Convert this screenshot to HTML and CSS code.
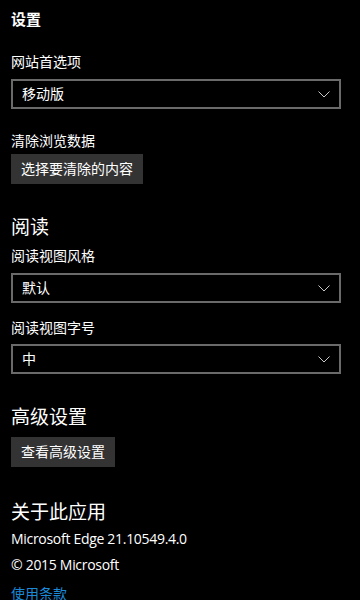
FILE: index.html
```html
<!DOCTYPE html>
<html lang="zh-CN">
<head>
<meta charset="utf-8">
<title>设置</title>
<link rel="stylesheet" href="styles.css">
</head>
<body>
<div class="page">
  <div class="header">设置</div>

  <div class="label label-first">网站首选项</div>
  <div class="select">
    <span class="select-text">移动版</span>
    <svg class="chev" width="12" height="7" viewBox="0 0 12 7"><path d="M0.5 0.5 L6 6 L11.5 0.5" fill="none" stroke="#c8c8c8" stroke-width="1"/></svg>
  </div>

  <div class="label label-gap">清除浏览数据</div>
  <div class="btn btn-tight">选择要清除的内容</div>

  <div class="title title-read">阅读</div>
  <div class="label label-sub">阅读视图风格</div>
  <div class="select">
    <span class="select-text">默认</span>
    <svg class="chev" width="12" height="7" viewBox="0 0 12 7"><path d="M0.5 0.5 L6 6 L11.5 0.5" fill="none" stroke="#c8c8c8" stroke-width="1"/></svg>
  </div>

  <div class="label label-gap2">阅读视图字号</div>
  <div class="select">
    <span class="select-text">中</span>
    <svg class="chev" width="12" height="7" viewBox="0 0 12 7"><path d="M0.5 0.5 L6 6 L11.5 0.5" fill="none" stroke="#c8c8c8" stroke-width="1"/></svg>
  </div>

  <div class="title title-adv">高级设置</div>
  <div class="btn btn-adv">查看高级设置</div>

  <div class="title title-about">关于此应用</div>
  <div class="info info-first">Microsoft Edge 21.10549.4.0</div>
  <div class="info">© 2015 Microsoft</div>
  <div class="link">使用条款</div>
</div>
</body>
</html>
```

FILE: styles.css
```css
html, body {
  margin: 0;
  padding: 0;
  background: #000;
}
body {
  color: #fff;
  font-family: "Noto Sans", "Noto Sans CJK SC", sans-serif;
  font-size: 14px;
  width: 360px;
  height: 600px;
  overflow: hidden;
}
.page {
  padding: 9px 0 0 11px;
  display: flex;
  flex-direction: column;
  align-items: flex-start;
}
.header {
  font-size: 15px;
  line-height: 20px;
  font-weight: 600;
}
.label {
  font-size: 14px;
  line-height: 20px;
}
.label-first { margin-top: 23px; margin-bottom: 7px; }
.label-gap { margin-top: 22px; margin-bottom: 3px; }
.label-sub { margin-top: 6px; margin-bottom: 7px; }
.label-gap2 { margin-top: 15px; margin-bottom: 6px; }
.select {
  box-sizing: border-box;
  width: 330px;
  height: 30px;
  border: 2px solid #6a6a6a;
  display: flex;
  align-items: center;
  justify-content: space-between;
  padding: 0 9px 0 9px;
}
.select-text {
  font-size: 14px;
  line-height: 20px;
}
.chev {
  display: block;
  margin-top: 1px;
}
.btn {
  box-sizing: border-box;
  height: 30px;
  background: #333;
  padding: 0 10px;
  display: flex;
  align-items: center;
  font-size: 14px;
  line-height: 20px;
  color: #fff;
}
.title {
  font-size: 19px;
  line-height: 26px;
}
.title-read { margin-top: 30px; }
.title-adv { margin-top: 30px; margin-bottom: 7px; }
.title-about { margin-top: 32px; }
.info {
  font-family: "Open Sans", "Noto Sans CJK SC", sans-serif;
  font-size: 14px;
  line-height: 20px;
  letter-spacing: -0.3px;
  margin-top: 6px;
}
.info-first { margin-top: 4px; }
.link {
  color: #1a8ad8;
  font-size: 14px;
  line-height: 20px;
  margin-top: 9px;
}
```
